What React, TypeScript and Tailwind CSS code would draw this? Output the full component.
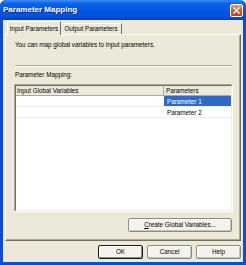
import React from 'react';

const font = "font-['Liberation_Sans',Arial,sans-serif]";

// botón estilo clásico XP
function Btn({ children, isDefault, className = '' }: { children: React.ReactNode; isDefault?: boolean; className?: string }) {
  return (
    <div
      className={`h-[14px] flex items-center justify-center text-[6.3px] text-black bg-[#F3F2EC] rounded-[2px] ${
        isDefault ? 'border border-[#1A1A1A] shadow-[inset_1px_1px_#FFFFFF,inset_-1px_-1px_#8E8B7E]' : 'border border-[#8E8B7E] shadow-[inset_1px_1px_#FFFFFF,inset_-1px_-1px_#C9C6B8]'
      } ${className}`}
    >
      {children}
    </div>
  );
}

export default function App() {
  const rows = [
    { name: '', param: 'Parameter  1', selected: true },
    { name: '', param: 'Parameter  2', selected: false },
  ];

  return (
    <div className={`w-[246px] h-[265px] flex flex-col bg-[#0A4ED8] rounded-t-[6px] overflow-hidden ${font}`}>
      {/* Barra de título */}
      <div className="h-[20px] shrink-0 flex items-center justify-between pl-[3px] pr-[3px] bg-[linear-gradient(180deg,#3D8DF5_0%,#0D62EA_18%,#0055E5_55%,#0050DA_85%,#0040BA_100%)]">
        <span className="text-white font-bold text-[8px] leading-none [text-shadow:1px_1px_#0A2A8A]">Parameter Mapping</span>
        <div className="w-[13px] h-[13px] rounded-[2px] border border-white bg-[linear-gradient(180deg,#F09A7C_0%,#E2582C_45%,#C8401A_100%)] flex items-center justify-center">
          <svg width="7" height="7" viewBox="0 0 7 7">
            <path d="M1 1L6 6M6 1L1 6" stroke="white" strokeWidth="1.4" strokeLinecap="square" />
          </svg>
        </div>
      </div>

      {/* Cuerpo del diálogo */}
      <div className="flex-1 mx-[3px] mb-[3px] bg-[#ECE9D8] flex flex-col px-[2px]">
        {/* Pestañas */}
        <div className="h-[14px] shrink-0 flex items-end pl-[2px]">
          <div className="relative z-10 -mb-[1px] h-[14px] w-[54px] bg-[#ECE9D8] border-t border-l border-r border-t-[#FFFFFF] border-l-[#FFFFFF] border-r-[#716F64] flex items-center justify-center text-[6.3px] text-black">
            Input Parameters
          </div>
          <div className="h-[11px] w-[61px] border-t border-r border-t-[#FFFFFF] border-r-[#716F64] flex items-center justify-center text-[6.3px] text-black">
            Output Parameters
          </div>
        </div>

        {/* Panel de la pestaña */}
        <div className="flex-1 flex flex-col border border-t-[#FFFFFF] border-l-[#FFFFFF] border-r-[#716F64] border-b-[#716F64] shadow-[inset_-1px_-1px_#ACA899] pl-[8px] pr-[7px]">
          <p className="mt-[6px] h-[8px] leading-[8px] pl-[1px] text-[6.3px] text-black">
            You can map global variables to input parameters.
          </p>
          <div className="mt-[16px] mx-[1px] h-[2px] border-t border-b border-t-[#ACA899] border-b-white" />
          <p className="mt-[4px] h-[8px] leading-[8px] pl-[1px] text-[6.3px] text-black">Parameter Mapping:</p>

          {/* Lista */}
          <div className="mt-[5px] h-[128px] border border-t-[#ACA899] border-l-[#ACA899] border-r-white border-b-white">
            <div className="h-full border border-t-[#716F64] border-l-[#716F64] border-r-[#F1EFE2] border-b-[#F1EFE2] bg-white flex flex-col">
              <div className="h-[10px] shrink-0 flex bg-[#EBEADB] border-b border-[#ACA899] text-[6.3px] leading-[9px] text-black">
                <div className="w-[148px] pl-[1px] border-r border-[#ACA899]">Input Global Variables</div>
                <div className="flex-1 pl-[2px]">Parameters</div>
              </div>
              {rows.map((r, i) => (
                <div key={i} className="h-[11px] flex text-[6.3px] leading-[11px] border-b border-[#F1EFE2]">
                  <div className="w-[148px] pl-[2px]">{r.name}</div>
                  <div className={`flex-1 pl-[3px] ${r.selected ? 'bg-[#316AC5] text-white' : 'text-black'}`}>{r.param}</div>
                </div>
              ))}
            </div>
          </div>

          <div className="mt-[6px] flex justify-end pr-[1px]">
            <Btn className="w-[104px]">
              <span><span className="underline">C</span>reate Global Variables...</span>
            </Btn>
          </div>
        </div>

        {/* Botones inferiores */}
        <div className="h-[14px] mt-[4px] mb-[3px] shrink-0 flex justify-end gap-[4px]">
          <Btn isDefault className="w-[45px]">OK</Btn>
          <Btn className="w-[45px]">Cancel</Btn>
          <Btn className="w-[45px]">Help</Btn>
        </div>
      </div>
    </div>
  );
}
